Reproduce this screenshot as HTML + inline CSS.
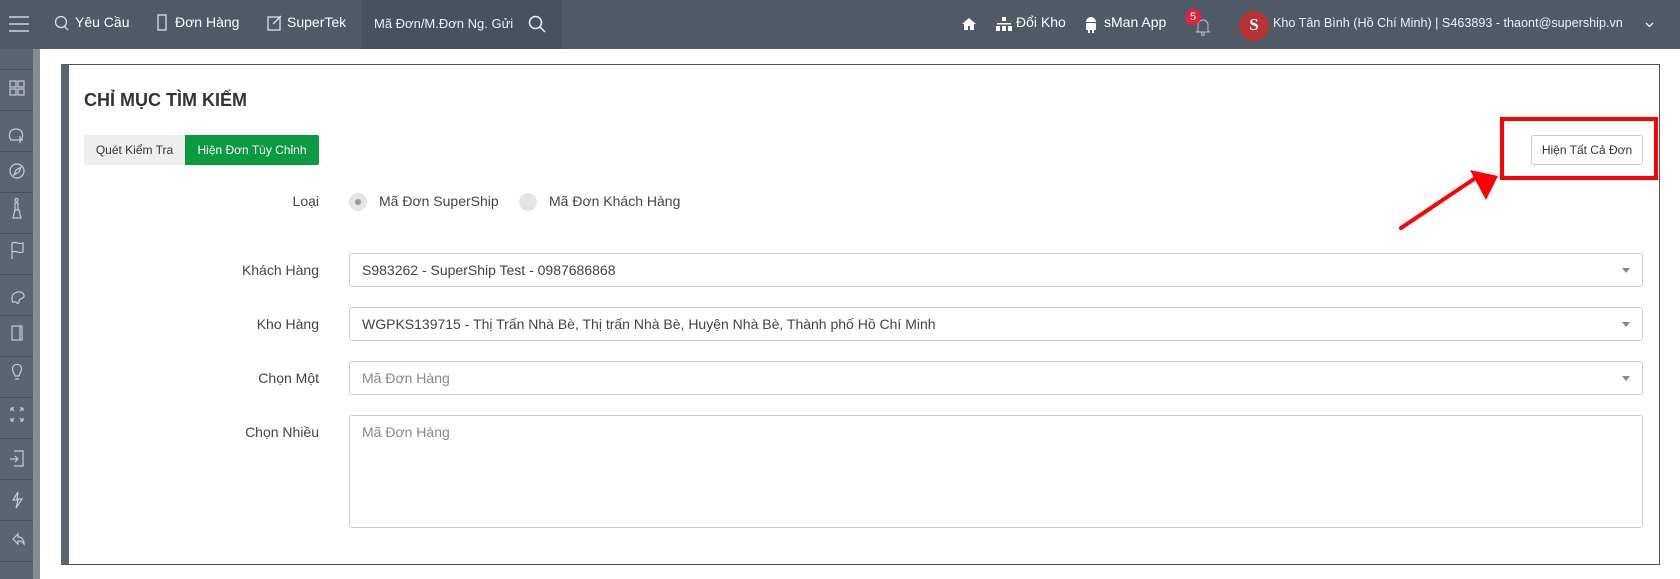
<!DOCTYPE html>
<html><head><meta charset="utf-8"><style>
*{box-sizing:border-box;margin:0;padding:0}
body{width:1680px;height:579px;overflow:hidden;background:#fff;font-family:"Liberation Sans","Noto Sans CJK SC",sans-serif;position:relative;color:#333}
.abs{position:absolute}
.top{left:0;top:0;width:1680px;height:49px;background:#4f5a66}
.tw{color:#fff;font-size:14px;top:14px;white-space:nowrap}
.side{left:0;top:49px;width:40px;height:530px;background:#5b6470}
.strip{left:33px;top:49px;width:7px;height:530px;background:#858c95}
.div{left:0;width:33px;height:1px;background:#4a525c}
.panel{left:61px;top:64px;width:1599px;height:501px;border:1px solid #555;border-left:8px solid #5a6470}
.lbl{font-size:14px;color:#444;text-align:right;width:200px;left:119px}
.inp{left:349px;width:1294px;height:34px;border:1px solid #ccc;border-radius:3px;font-size:14px;color:#444;padding:8px 12px;white-space:nowrap}
.car{right:12px;top:14px;border-left:4px solid transparent;border-right:4px solid transparent;border-top:5px solid #888}
</style></head><body>
<div class="abs top"></div>
<div class="abs" style="left:362px;top:0;width:200px;height:49px;background:#465260"></div>
<svg class="abs" style="left:8px;top:14px" width="22" height="20"><g stroke="#cfd3d8" stroke-width="1.5"><line x1="1" y1="3" x2="21" y2="3"/><line x1="1" y1="10" x2="21" y2="10"/><line x1="1" y1="17" x2="21" y2="17"/></g></svg>
<svg class="abs" style="left:54px;top:15px" width="16" height="16" fill="none" stroke="#dde" stroke-width="1.3"><circle cx="7" cy="7" r="5.5"/><path d="M10 11l4 4"/></svg>
<div class="abs tw" style="left:75px">Yêu Cầu</div>
<svg class="abs" style="left:156px;top:14px" width="12" height="18" fill="none" stroke="#dde" stroke-width="1.3"><rect x="2" y="1" width="8" height="15"/></svg>
<div class="abs tw" style="left:175px">Đơn Hàng</div>
<svg class="abs" style="left:267px;top:14px" width="16" height="17" fill="none" stroke="#dde" stroke-width="1.3"><rect x="1" y="3" width="12" height="13"/><path d="M6 10l8-8"/></svg>
<div class="abs tw" style="left:287px">SuperTek</div>
<div class="abs tw" style="left:374px;top:16px;font-size:13px;color:#eef">Mã Đơn/M.Đơn Ng. Gửi</div>
<svg class="abs" style="left:528px;top:15px" width="18" height="18" fill="none" stroke="#eef" stroke-width="1.5"><circle cx="7.5" cy="7.5" r="6"/><path d="M12 12l5 5"/></svg>
<svg class="abs" style="left:962px;top:18px" width="14" height="12" fill="#fff"><path d="M7 0L0 6h2v6h4V8h2v4h4V6h2z"/></svg>
<svg class="abs" style="left:996px;top:17px" width="16" height="14" fill="#fff"><rect x="6" y="0" width="4" height="4"/><rect x="0" y="9" width="4" height="5"/><rect x="6" y="9" width="4" height="5"/><rect x="12" y="9" width="4" height="5"/><rect x="1" y="6" width="14" height="1.5"/></svg>
<div class="abs tw" style="left:1016px">Đổi Kho</div>
<svg class="abs" style="left:1084px;top:16px" width="14" height="17" fill="#fff"><path d="M2 6a5 5 0 0 1 10 0z"/><rect x="2" y="7" width="10" height="7" rx="1"/><rect x="4" y="13" width="2" height="4"/><rect x="8" y="13" width="2" height="4"/></svg>
<div class="abs tw" style="left:1104px">sMan App</div>
<svg class="abs" style="left:1195px;top:16px" width="16" height="20" fill="none" stroke="#aab" stroke-width="1.2"><path d="M3 15V9a5 5 0 0 1 10 0v6l2 1H1z"/><circle cx="8" cy="18" r="1.5"/></svg>
<div class="abs" style="left:1185px;top:9px;width:16px;height:16px;border-radius:50%;background:#e0223d;color:#fff;font-size:11px;text-align:center;line-height:16px">5</div>
<div class="abs" style="left:1239px;top:11px;width:30px;height:30px;border-radius:50%;background:#b83235;color:#fff;font-family:'Liberation Serif',serif;font-weight:bold;font-size:17px;text-align:center;line-height:28px">S</div>
<div class="abs tw" style="left:1273px;top:16px;font-size:12.6px;color:#eef">Kho Tân Bình (Hồ Chí Minh) | S463893 - thaont@supership.vn</div>
<svg class="abs" style="left:1645px;top:22px" width="9" height="6" fill="none" stroke="#eef" stroke-width="1.3"><path d="M1 1l3.5 3.5L8 1"/></svg>

<div class="abs side"></div><div class="abs strip"></div>
<div class="abs div" style="top:69px"></div><div class="abs div" style="top:110px"></div><div class="abs div" style="top:151px"></div><div class="abs div" style="top:192px"></div><div class="abs div" style="top:233px"></div><div class="abs div" style="top:274px"></div><div class="abs div" style="top:315px"></div><div class="abs div" style="top:356px"></div><div class="abs div" style="top:397px"></div><div class="abs div" style="top:438px"></div><div class="abs div" style="top:479px"></div><div class="abs div" style="top:520px"></div><div class="abs div" style="top:561px"></div>
<svg class="abs" style="left:0;top:49px" width="33" height="530" fill="none" stroke="#c8ccd2" stroke-width="1.2">
<rect x="10" y="32" width="6" height="6"/><rect x="18" y="32" width="6" height="6"/><rect x="10" y="40" width="6" height="6"/><rect x="18" y="40" width="6" height="6"/>
<path d="M11 91c-3-4-2-11 5-11s8 7 5 11h-10zM11 91h12M20 87v7"/>
<circle cx="17" cy="122" r="7"/><path d="M14 126l2-5 5-3-2 5z"/>
<path d="M15 161v-7h3v7M13 169h8l-2-8h-4z"/><circle cx="16.5" cy="151" r="1.5"/>
<path d="M12 210v-16c5-2 7 2 11 0v9c-4 2-6-2-11 0"/>
<path d="M12 249c0-7 11-8 12-3 1 4-5 3-5 6s-2 3-3 1-4 4-4-4z"/>
<rect x="12" y="277" width="10" height="14"/><path d="M20 277v14"/>
<path d="M13 322a4.5 4.5 0 1 1 8 0l-2 5h-4z M15 330h4"/>
<path d="M11 359l3 3M11 359v3M11 359h3M23 359l-3 3M23 359v3M23 359h-3M11 372l3-3M11 372v-3M11 372h3M23 372l-3-3M23 372v-3M23 372h-3"/>
<path d="M14 402h9v15h-9M10 410h8M15 407l3 3-3 3"/>
<path d="M18 443l-5 8h5l-2 8 6-9h-5z"/>
<path d="M13 490l5-5v3c4 0 6 3 6 7-2-3-3-3-6-3v3z"/>
</svg>

<div class="abs panel"></div>
<div class="abs" style="left:84px;top:90px;font-size:18px;font-weight:bold;color:#333">CHỈ MỤC TÌM KIẾM</div>
<div class="abs" style="left:84px;top:135px;width:101px;height:30px;background:#eee;font-size:12px;color:#333;text-align:center;line-height:30px;border-radius:2px 0 0 2px">Quét Kiểm Tra</div>
<div class="abs" style="left:185px;top:135px;width:134px;height:30px;background:#0b9a40;font-size:12px;color:#fff;text-align:center;line-height:30px;border-radius:0 2px 2px 0">Hiện Đơn Tùy Chỉnh</div>
<div class="abs" style="left:1531px;top:135px;width:112px;height:30px;border:1px solid #ccc;border-radius:3px;font-size:12px;color:#333;text-align:center;line-height:28px">Hiện Tất Cả Đơn</div>
<div class="abs" style="left:1500px;top:117px;width:158px;height:63px;border:4px solid #f00"></div>
<svg class="abs" style="left:1390px;top:165px" width="120" height="70"><line x1="11" y1="63" x2="90" y2="10" stroke="#f00" stroke-width="4" stroke-linecap="round"/><polygon points="108,11 80,5 96,35" fill="#f00"/></svg>

<div class="abs lbl" style="top:193px">Loại</div>
<div class="abs" style="left:349px;top:193px;width:18px;height:18px;border-radius:50%;background:#e4e4e4"></div>
<div class="abs" style="left:355px;top:199px;width:6px;height:6px;border-radius:50%;background:#999"></div>
<div class="abs" style="left:379px;top:193px;font-size:14px;color:#444">Mã Đơn SuperShip</div>
<div class="abs" style="left:519px;top:193px;width:18px;height:18px;border-radius:50%;background:#e4e4e4"></div>
<div class="abs" style="left:549px;top:193px;font-size:14px;color:#444">Mã Đơn Khách Hàng</div>

<div class="abs lbl" style="top:262px">Khách Hàng</div>
<div class="abs inp" style="top:253px">S983262 - SuperShip Test - 0987686868<div class="abs car"></div></div>
<div class="abs lbl" style="top:316px">Kho Hàng</div>
<div class="abs inp" style="top:307px">WGPKS139715 - Thị Trấn Nhà Bè, Thị trấn Nhà Bè, Huyện Nhà Bè, Thành phố Hồ Chí Minh<div class="abs car"></div></div>
<div class="abs lbl" style="top:370px">Chọn Một</div>
<div class="abs inp" style="top:361px;color:#888">Mã Đơn Hàng<div class="abs car"></div></div>
<div class="abs lbl" style="top:424px">Chọn Nhiều</div>
<div class="abs inp" style="top:415px;height:113px;color:#888">Mã Đơn Hàng</div>
</body></html>
